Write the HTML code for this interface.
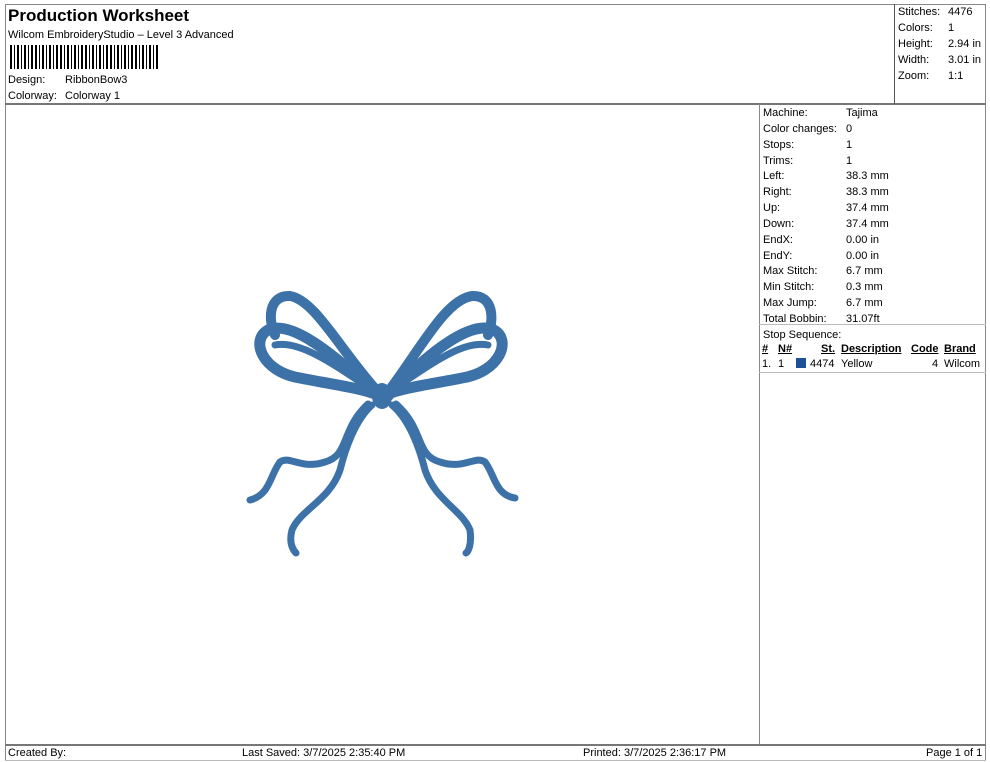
<!DOCTYPE html>
<html><head><style>
body{margin:0;width:990px;height:762px;background:#fff;font-family:"Liberation Sans",Arial,sans-serif;color:#000;position:relative;overflow:hidden}
.a{position:absolute;white-space:nowrap;font-size:11px}
.l{position:absolute;background:#888}
</style></head><body>
<div class="l" style="left:5px;top:4px;width:981px;height:1px"></div>
<div class="l" style="left:5px;top:4px;width:1px;height:757px"></div>
<div class="l" style="left:985px;top:4px;width:1px;height:757px"></div>
<div class="l" style="left:5px;top:103px;width:981px;height:2px;background:#777"></div>
<div class="l" style="left:894px;top:4px;width:1px;height:100px;background:#555"></div>
<div class="l" style="left:759px;top:104px;width:1px;height:640px"></div>
<div class="l" style="left:759px;top:324px;width:227px;height:1px;background:#bbb"></div>
<div class="l" style="left:759px;top:372px;width:227px;height:1px;background:#bbb"></div>
<div class="l" style="left:5px;top:744px;width:981px;height:2px;background:#777"></div>
<div class="l" style="left:5px;top:760px;width:981px;height:1px;background:#bbb"></div>

<div class="a" style="left:8px;top:6px;font-size:17px;font-weight:bold">Production Worksheet</div>
<div class="a" style="left:8px;top:29px">Wilcom EmbroideryStudio – Level 3 Advanced</div>
<svg style="position:absolute;left:10px;top:45px" width="148" height="24">
<g fill="#000">
<rect x="0" width="2" height="24"/><rect x="4" width="1" height="24"/><rect x="7" width="2" height="24"/><rect x="11" width="1" height="24"/><rect x="14" width="2" height="24"/><rect x="18" width="1" height="24"/><rect x="21" width="2" height="24"/><rect x="25" width="2" height="24"/><rect x="29" width="1" height="24"/><rect x="32" width="2" height="24"/><rect x="36" width="1" height="24"/><rect x="39" width="2" height="24"/><rect x="43" width="1" height="24"/><rect x="46" width="2" height="24"/><rect x="50" width="2" height="24"/><rect x="54" width="1" height="24"/><rect x="57" width="2" height="24"/><rect x="61" width="1" height="24"/><rect x="64" width="2" height="24"/><rect x="68" width="1" height="24"/><rect x="71" width="2" height="24"/><rect x="75" width="2" height="24"/><rect x="79" width="1" height="24"/><rect x="82" width="2" height="24"/><rect x="86" width="1" height="24"/><rect x="89" width="2" height="24"/><rect x="93" width="1" height="24"/><rect x="96" width="2" height="24"/><rect x="100" width="2" height="24"/><rect x="104" width="1" height="24"/><rect x="107" width="2" height="24"/><rect x="111" width="1" height="24"/><rect x="114" width="2" height="24"/><rect x="118" width="1" height="24"/><rect x="121" width="2" height="24"/><rect x="125" width="2" height="24"/><rect x="129" width="1" height="24"/><rect x="132" width="2" height="24"/><rect x="136" width="1" height="24"/><rect x="139" width="2" height="24"/><rect x="143" width="1" height="24"/><rect x="146" width="2" height="24"/>
</g></svg>
<div class="a" style="left:8px;top:74px">Design:</div><div class="a" style="left:65px;top:74px">RibbonBow3</div>
<div class="a" style="left:8px;top:90px">Colorway:</div><div class="a" style="left:65px;top:90px">Colorway 1</div>

<div class="a" style="left:898px;top:6px">Stitches:</div><div class="a" style="left:948px;top:6px">4476</div>
<div class="a" style="left:898px;top:22px">Colors:</div><div class="a" style="left:948px;top:22px">1</div>
<div class="a" style="left:898px;top:38px">Height:</div><div class="a" style="left:948px;top:38px">2.94 in</div>
<div class="a" style="left:898px;top:54px">Width:</div><div class="a" style="left:948px;top:54px">3.01 in</div>
<div class="a" style="left:898px;top:70px">Zoom:</div><div class="a" style="left:948px;top:70px">1:1</div>

<div style="position:absolute;left:763px;top:106px;font-size:11px;line-height:15.85px">
<div>Machine:</div><div>Color changes:</div><div>Stops:</div><div>Trims:</div><div>Left:</div><div>Right:</div><div>Up:</div><div>Down:</div><div>EndX:</div><div>EndY:</div><div>Max Stitch:</div><div>Min Stitch:</div><div>Max Jump:</div><div>Total Bobbin:</div><div>Stop Sequence:</div></div>
<div style="position:absolute;left:846px;top:106px;font-size:11px;line-height:15.85px">
<div>Tajima</div><div>0</div><div>1</div><div>1</div><div>38.3 mm</div><div>38.3 mm</div><div>37.4 mm</div><div>37.4 mm</div><div>0.00 in</div><div>0.00 in</div><div>6.7 mm</div><div>0.3 mm</div><div>6.7 mm</div><div>31.07ft</div></div>
<div class="a" style="left:762px;top:343px;font-weight:bold;text-decoration:underline">#</div>
<div class="a" style="left:778px;top:343px;font-weight:bold;text-decoration:underline">N#</div>
<div class="a" style="left:821px;top:343px;font-weight:bold;text-decoration:underline">St.</div>
<div class="a" style="left:841px;top:343px;font-weight:bold;text-decoration:underline">Description</div>
<div class="a" style="left:911px;top:343px;font-weight:bold;text-decoration:underline">Code</div>
<div class="a" style="left:944px;top:343px;font-weight:bold;text-decoration:underline">Brand</div>
<div class="a" style="left:762px;top:358px">1.</div><div class="a" style="left:778px;top:358px">1</div>
<div style="position:absolute;left:796px;top:358px;width:10px;height:10px;background:#1f4f94"></div>
<div class="a" style="left:810px;top:358px">4474</div><div class="a" style="left:841px;top:358px">Yellow</div>
<div class="a" style="left:932px;top:358px">4</div><div class="a" style="left:944px;top:358px">Wilcom</div>

<svg style="position:absolute;left:0;top:0" width="760" height="744">
<g fill="none" stroke="#3d72a8" stroke-linecap="round">
<path d="M378 392 C340 350 315 300 290 296 C268 295 268 320 275 335" stroke-width="10"/>
<path d="M378 396 C330 350 290 320 268 330 C250 340 262 372 300 378 C330 384 360 388 375 394" stroke-width="11"/>
<path d="M372 390 C335 365 300 340 275 345" stroke-width="7"/>
<path d="M388 392 C420 350 445 300 472 296 C494 295 494 320 488 335" stroke-width="10"/>
<path d="M388 396 C430 350 472 320 494 330 C512 340 500 372 462 378 C432 384 402 388 388 394" stroke-width="11"/>
<path d="M392 390 C430 365 462 340 488 345" stroke-width="7"/>
<ellipse cx="382" cy="396" rx="10" ry="13" fill="#3d72a8" stroke="none"/>
<path d="M372 405 C355 420 345 450 340 470 C330 500 300 510 292 530 C288 545 295 552 296 553" stroke-width="7"/>
<path d="M368 404 C340 430 350 455 325 462 C300 470 290 455 280 462 C270 475 270 495 250 500" stroke-width="7"/>
<path d="M392 405 C410 420 420 450 425 470 C435 500 462 510 470 530 C472 545 468 552 466 553" stroke-width="7"/>
<path d="M396 404 C425 430 415 455 440 462 C465 470 475 455 485 462 C495 475 495 495 515 498" stroke-width="7"/>
</g></svg>

<div class="a" style="left:8px;top:747px">Created By:</div>
<div class="a" style="left:242px;top:747px">Last Saved: 3/7/2025 2:35:40 PM</div>
<div class="a" style="left:583px;top:747px">Printed: 3/7/2025 2:36:17 PM</div>
<div class="a" style="left:926px;top:747px">Page 1 of 1</div>
</body></html>
